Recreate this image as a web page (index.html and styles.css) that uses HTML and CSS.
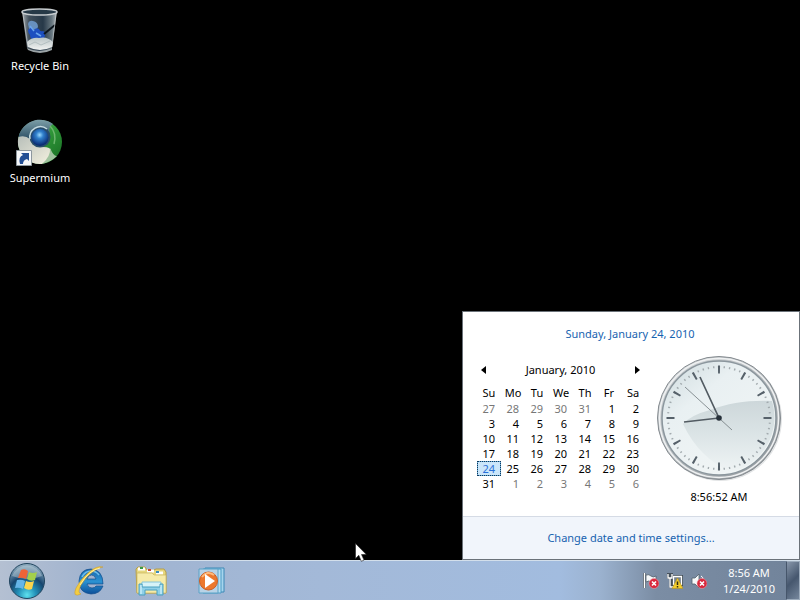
FILE: index.html
```html
<!DOCTYPE html>
<html lang="en">
<head>
<meta charset="utf-8">
<title>Desktop</title>
<link rel="stylesheet" href="styles.css">
</head>
<body>
<main class="desktop">
  <a class="shortcut" href="#recycle">
    <svg class="shortcut-icon" viewBox="0 0 48 48" aria-hidden="true">
      <defs>
        <linearGradient id="bin" x1="0" x2="1"><stop offset="0" stop-color="#a5acb0"/><stop offset=".2" stop-color="#414f5b"/><stop offset=".6" stop-color="#263848"/><stop offset=".85" stop-color="#687780"/><stop offset="1" stop-color="#b4babd"/></linearGradient>
        <linearGradient id="paper" x1="0" y1="0" x2="0" y2="1"><stop offset="0" stop-color="#b9c4c6"/><stop offset="1" stop-color="#f1f3f2"/></linearGradient>
      </defs>
      <path d="M6 5 L11 42 Q24 49 36 42 L41 5Z" fill="url(#bin)"/>
      <path d="M12 18q1-4 5-3 5 1 5 6l-2 3-7-1z" fill="#6790be"/>
      <path d="M12 24q3-4 6 0 2-3 5-1 1 3 4 2 3 1 2 4 0 4-5 5-3-1-5 0-5 0-5-5-2-2-2-5z" fill="#1d4fc0"/>
      <path d="M14 20l4 5M20 27l5 3" stroke="#6aa4ec" stroke-width="1.5"/>
      <path d="M39 19L28 28" stroke="#0c151d" stroke-width="2"/>
      <path d="M11 36q5-5 12-4 8-2 14 4l-1 5q-12 6-24 0z" fill="url(#paper)"/>
      <path d="M13 39l6-3 6 3 9-4" fill="none" stroke="#b3bfc1"/>
      <path d="M11 42q12 6 25 0v2q-12 6-24 0z" fill="#9ba3a6"/>
      <ellipse cx="23.5" cy="6" rx="17.5" ry="3" fill="#263947" stroke="#c7cccf" stroke-width="1.5"/>
      <path d="M7 8l5 33M40 8l-4 33" stroke="#d1d5d6" opacity=".6"/>
    </svg>
    <span>Recycle Bin</span>
  </a>
  <a class="shortcut" href="#supermium">
    <svg class="shortcut-icon" viewBox="0 0 48 48" aria-hidden="true">
      <defs>
        <radialGradient id="orb" cx=".48" cy=".35" r=".6"><stop offset="0" stop-color="#9bdaff"/><stop offset=".35" stop-color="#3181cd"/><stop offset="1" stop-color="#092b73"/></radialGradient>
        <linearGradient id="green" x1="0" y1="0" x2="1" y2="1"><stop offset="0" stop-color="#8ec48d"/><stop offset=".5" stop-color="#2f9738"/><stop offset="1" stop-color="#166a22"/></linearGradient>
        <linearGradient id="steel" x1="0" y1="0" x2="0" y2="1"><stop offset="0" stop-color="#7d9fa8"/><stop offset="1" stop-color="#284b61"/></linearGradient>
        <linearGradient id="cream" x1="0" y1="0" x2="1" y2="1"><stop offset="0" stop-color="#b8bfba"/><stop offset="1" stop-color="#f4f1df"/></linearGradient>
      </defs>
      <circle cx="24" cy="24" r="22" fill="url(#green)"/>
      <path d="M2.500 19A22 22 0 0 1 37 6Q32 9 34 15L14 17 13 22Q7 20 2.500 19Z" fill="url(#steel)"/>
      <path d="M2.500 19Q9 17 14 21 17 30 27 29 35 29 35 33 34 42 26 46A22 22 0 0 1 2.500 19Z" fill="url(#cream)"/>
      <path d="M34 30q1 8-8 16 9-2 15-8-3 1-7-8z" fill="#9fc29d"/>
      <path d="M34 8q7 7 4 18" fill="none" stroke="#6cb56d" stroke-width="1.500"/>
      <circle cx="24" cy="19" r="10.500" fill="#274d6b"/>
      <path d="M14 21a10.500 10.500 0 0 1 17-10" fill="none" stroke="#c8dce1" stroke-width="1.500"/>
      <circle cx="24" cy="19.500" r="8.500" fill="url(#orb)"/>
      <path d="M.5 32.500h15v15H.5z" fill="#f5f7f9" stroke="#8d979e"/>
      <path d="M4 46q-2-7 3-9L5 35h8v8l-2-2q-4 1-4 5z" fill="#214d94"/>
    </svg>
    <span>Supermium</span>
  </a>

  <section class="flyout" aria-label="Date and time">
    <div class="flyout-body">
      <a class="today" href="#today">Sunday, January 24, 2010</a>
      <div class="panels">
        <div class="calendar">
          <div class="month">
            <button type="button" aria-label="Previous month"><svg viewBox="0 0 5 8"><path d="M5 0v8L0 4z"/></svg></button>
            <span>January, 2010</span>
            <button type="button" aria-label="Next month"><svg viewBox="0 0 5 8"><path d="M0 0v8l5-4z"/></svg></button>
          </div>
          <table>
            <thead><tr><th>Su</th><th>Mo</th><th>Tu</th><th>We</th><th>Th</th><th>Fr</th><th>Sa</th></tr></thead>
            <tbody>
              <tr><td class="dim">27</td><td class="dim">28</td><td class="dim">29</td><td class="dim">30</td><td class="dim">31</td><td>1</td><td>2</td></tr>
              <tr><td>3</td><td>4</td><td>5</td><td>6</td><td>7</td><td>8</td><td>9</td></tr>
              <tr><td>10</td><td>11</td><td>12</td><td>13</td><td>14</td><td>15</td><td>16</td></tr>
              <tr><td>17</td><td>18</td><td>19</td><td>20</td><td>21</td><td>22</td><td>23</td></tr>
              <tr><td class="selected">24</td><td>25</td><td>26</td><td>27</td><td>28</td><td>29</td><td>30</td></tr>
              <tr><td>31</td><td class="dim">1</td><td class="dim">2</td><td class="dim">3</td><td class="dim">4</td><td class="dim">5</td><td class="dim">6</td></tr>
            </tbody>
          </table>
        </div>
        <div class="clock">
          <svg viewBox="-64 -64 128 128" aria-hidden="true">
            <defs>
              <linearGradient id="rim" x1="0" y1="0" x2="1" y2="1"><stop offset="0" stop-color="#d9dddf"/><stop offset=".5" stop-color="#b5babd"/><stop offset="1" stop-color="#8f9599"/></linearGradient>
              <linearGradient id="face" x1="0" y1="0" x2=".8" y2="1"><stop offset="0" stop-color="#cddadd"/><stop offset=".35" stop-color="#e9f0f2"/><stop offset="1" stop-color="#f2f6f6"/></linearGradient>
              <linearGradient id="sheen" x1="0" y1="0" x2="0" y2="1"><stop offset="0" stop-color="#cdd7da"/><stop offset=".4" stop-color="#d9e2e4"/><stop offset="1" stop-color="#eff4f5"/></linearGradient>
            </defs>
            <circle cx="1" cy="1" r="62" fill="#e2e4e5"/>
            <circle r="61.5" fill="url(#rim)" stroke="#858b90"/>
            <circle r="59.5" fill="none" stroke="#eff1f2" stroke-width="1.5"/>
            <circle r="57" fill="url(#face)" stroke="#8b969d" stroke-width="1.5"/>
            <path d="M-36 6Q-28-3-9-8C10-15 30-18 53-17A56 56 0 0 1 12 54Q-20 40-36 6Z" fill="url(#sheen)"/>
            <circle r="51" fill="none" stroke="#a3abaf" stroke-width="2" pathLength="360" stroke-dasharray="1.6 4.4" stroke-dashoffset=".8"/>
            <circle r="48.500" fill="none" stroke="#56616a" stroke-width="8" pathLength="360" stroke-dasharray="2.4 27.6" stroke-dashoffset="1.2"/>
            <path d="M-34 -31L13 12" stroke="#70787c" stroke-width=".8"/>
            <path d="M0 0L-35 4M0 0L-19-41" stroke="#525b62" stroke-width="1.700"/>
            <circle r="2.8" fill="#263039"/>
          </svg>
          <time>8:56:52 AM</time>
        </div>
      </div>
    </div>
    <footer class="flyout-footer"><a href="#settings">Change date and time settings...</a></footer>
  </section>

  <svg class="cursor" viewBox="0 0 12 19" aria-hidden="true"><path d="M.5.5v15l3.3-3.2 2.5 6 2.7-1.2-2.5-5.6h4.8z" fill="#fff" stroke="#222" stroke-width=".6"/></svg>
</main>

<nav class="taskbar" aria-label="Taskbar">
  <button class="start" type="button" aria-label="Start">
    <svg viewBox="0 0 38 38">
      <defs>
        <radialGradient id="start" cx=".5" cy=".9" r=".85"><stop offset="0" stop-color="#5ee1ee"/><stop offset=".3" stop-color="#2391b9"/><stop offset=".62" stop-color="#17466f"/><stop offset="1" stop-color="#8ba9bd"/></radialGradient>
      </defs>
      <circle cx="19" cy="19" r="17.5" fill="url(#start)" stroke="#21455f"/>
      <path d="M4 14A16 16 0 0 1 34 14Q19 20 4 14Z" fill="#d3e1e7" opacity=".4"/>
      <path d="M13 8q4-2 7 1l-2 8q-4-2-8-1z" fill="#ed6337"/>
      <path d="M21 10q4 2 8 0l-2 8q-4 2-8-1z" fill="#a3cf4c"/>
      <path d="M9 18q5-1 8 1l-2 8q-4-2-8-1z" fill="#65b5e8"/>
      <path d="M18 19q4 2 8 0l-2 8q-4 2-8-1z" fill="#fbd44c"/>
    </svg>
  </button>
  <div class="apps">
    <button type="button" aria-label="Internet Explorer">
      <svg viewBox="0 0 32 32">
        <defs><linearGradient id="ie" x1="0" y1="0" x2="0" y2="1"><stop offset="0" stop-color="#1767ad"/><stop offset=".5" stop-color="#2b91d1"/><stop offset="1" stop-color="#0b4f99"/></linearGradient></defs>
        <path d="M29 19H13q1 4 5 4 3 0 4-2h7q-3 8-12 8Q5 28 5 16 6 4 17 4q12 1 12 15zM13 14h9q-1-4-4.500-4T13 14z" fill="url(#ie)" stroke="#124d8c" stroke-width=".7"/>
        <path d="M8 12q3-6 9-6 5 0 8 4" fill="none" stroke="#6dbbe8" stroke-width="1.500"/>
        <path d="M29 2q-6-2-15 6Q6 15 2 23q-4 10 5 6-4-1 0-9Q13 10 20 6q6-4 9-4z" fill="#f3cd43" stroke="#c6962a" stroke-width=".5"/>
        <path d="M26 3q-11 2-20 17" fill="none" stroke="#fff0a1"/>
      </svg>
    </button>
    <button type="button" aria-label="Windows Explorer">
      <svg viewBox="0 0 32 32">
        <path d="M1 4l2-2h7l2 3h7l2-1h8l2 3v21H2z" fill="#e6d77d" stroke="#b69e48"/>
        <path d="M3 4h7M12 6h7M21 8h7" stroke="#fff" stroke-width="3"/>
        <path d="M5 3h3" stroke="#399a45" stroke-width="2"/><path d="M13 5h3" stroke="#c74a32" stroke-width="2"/><path d="M21 7h3" stroke="#398bbd" stroke-width="2"/>
        <path d="M2 8h15l2 2h12v18H2z" fill="#f6eba9" stroke="#c9b460" stroke-width=".7"/>
        <path d="M7 17h19v6H7z" fill="#d7f3f8" stroke="#88c5da"/>
        <path d="M4 19h3v3h18v-3h3v11h-6v-5H10v5H4z" fill="#8fd0e8" stroke="#4ba0c0"/>
        <path d="M6 20v9M26 20v9" stroke="#e1f9ff"/>
      </svg>
    </button>
    <button type="button" aria-label="Windows Media Player">
      <svg viewBox="0 0 32 32">
        <path d="M9 3h19v24H9z" fill="#a6d4ed" stroke="#3d88b5"/>
        <path d="M7 4h18v24H7z" fill="#b9e0f3" stroke="#4a9ac4"/>
        <path d="M3 4h19v24H3z" fill="#b8d3e7" stroke="#5aa2c6"/>
        <circle cx="12.500" cy="16" r="9" fill="#ec782d" stroke="#c95d25"/>
        <path d="M6 12q5-7 12-2" fill="none" stroke="#ffba7b" stroke-width="2"/>
        <path d="M9 9v14l10-7z" fill="#fff"/>
      </svg>
    </button>
  </div>
  <div class="tray">
    <button type="button" aria-label="Action Center">
      <svg viewBox="0 0 16 16"><path d="M1.500 0v15" stroke="#48535e" stroke-width="3"/><path d="M1.500 0v15" stroke="#fff" stroke-width="1.500"/><path d="M3 2q3-1 5 1t5 0v6q-3 2-5 0t-5 0z" fill="#f6f8f9" stroke="#52606c" stroke-width=".8"/><circle cx="11" cy="10.500" r="5" fill="#d8283d" stroke="#f3a5ad" stroke-width=".5"/><path d="M9 8.500l4 4m0-4l-4 4" stroke="#fff" stroke-width="1.600"/></svg>
    </button>
    <button type="button" aria-label="Network">
      <svg viewBox="0 0 16 16"><path d="M5 2h11v11H5z" fill="#3e4a53"/><path d="M6.500 3.500h8v8h-8z" fill="#76828b" stroke="#fff" stroke-width="1.300"/><path d="M0 0h6v6H5v9H2V6H0z" fill="#46515b"/><path d="M1 1v4h4V1M3 5v9h3" fill="none" stroke="#fff" stroke-width="1.300"/><path d="M10.500 5l5.500 10.500H5z" fill="#f3cd2d" stroke="#ad861b" stroke-width=".5"/><path d="M10.500 8.500v3.500m0 1v1.500" stroke="#332d13" stroke-width="1.500"/></svg>
    </button>
    <button type="button" aria-label="Volume muted">
      <svg viewBox="0 0 16 16"><path d="M1 5h3l4-4v14l-4-4H1z" fill="#f6f8f9" stroke="#51606c" stroke-width=".8"/><path d="M10 3q2 1 2 3" fill="none" stroke="#fff"/><circle cx="11" cy="10.500" r="5" fill="#d8283d" stroke="#f3a5ad" stroke-width=".5"/><path d="M9 8.500l4 4m0-4l-4 4" stroke="#fff" stroke-width="1.600"/></svg>
    </button>
  </div>
  <button class="tray-clock" type="button"><span>8:56 AM</span><span>1/24/2010</span></button>
  <button class="show-desktop" type="button" aria-label="Show desktop"></button>
</nav>
</body>
</html>
```
FILE: styles.css
```css
* { box-sizing: border-box; }

body {
  margin: 0;
  min-height: 100vh;
  display: flex;
  flex-direction: column;
  background: #000;
  font: 11px/16px "Noto Sans", "Open Sans", sans-serif;
}

a { color: #1763b0; text-decoration: none; }

button {
  margin: 0;
  padding: 0;
  border: 0;
  background: none;
  font: inherit;
  color: inherit;
}

svg { display: block; }

.desktop {
  position: relative;
  flex: 1;
  display: flex;
  flex-direction: column;
  align-items: flex-start;
  gap: 38px;
  padding: 6px 2px;
}

.shortcut {
  width: 76px;
  height: 74px;
  display: flex;
  flex-direction: column;
  align-items: center;
  gap: 4px;
  color: #fff;
}

.shortcut-icon { width: 48px; height: 48px; }

.flyout {
  position: absolute;
  right: 0;
  bottom: 0;
  width: 338px;
  border: 1px solid #6b7279;
  background: #fff;
}

.flyout-body {
  min-height: 204px;
  padding: 14px 16px 0 14px;
}

.today { display: block; text-align: center; }

.panels {
  display: flex;
  justify-content: space-between;
  margin-top: 12px;
}

.calendar { width: 168px; padding-top: 8px; }

.month {
  display: flex;
  justify-content: space-between;
  align-items: center;
  padding: 0 5px 0 4px;
  margin-bottom: 6px;
}

.month button { padding: 4px 0; }
.month svg { width: 5px; height: 8px; }

table {
  width: 100%;
  table-layout: fixed;
  border-collapse: collapse;
  text-align: right;
}

th, td { height: 15px; padding: 0 6px 0 0; line-height: 15px; }
th { height: 17px; padding: 0; font-weight: 400; text-align: center; }

.dim { color: #777; }

.selected {
  color: #2a70d8;
  background: #cbe6fa;
  outline: 1px dotted #123a5c;
  outline-offset: -1px;
  box-shadow: inset 0 0 0 1px #67aad7;
}

.clock {
  display: flex;
  flex-direction: column;
  align-items: center;
  gap: 7px;
}

.clock svg { width: 128px; height: 128px; }

.flyout-footer {
  height: 43px;
  display: flex;
  align-items: center;
  justify-content: center;
  border-top: 1px solid #d5dbe5;
  background: #f1f5fb;
}

.cursor {
  position: absolute;
  left: 355px;
  top: 543px;
  width: 12px;
  height: 19px;
}

.taskbar {
  display: flex;
  align-items: center;
  height: 40px;
  border-top: 1px solid #d3dfeb;
  background: linear-gradient(90deg, #b4c0d2 0%, #a0b3cf 12%, #a3b9d8 40%, #a2bcdf 70%, #9bb2cf 75%, #7b8da4 82%, #71839a 100%);
}

.start { margin-left: 8px; }
.start svg { width: 38px; height: 38px; }

.apps { display: flex; gap: 29px; margin-left: 28px; }
.apps svg { width: 32px; height: 32px; }

.tray { display: flex; gap: 8px; margin-left: auto; }
.tray svg { width: 16px; height: 16px; }

.tray-clock {
  display: flex;
  flex-direction: column;
  width: 74px;
  margin-left: 5px;
  color: #fff;
}

.show-desktop {
  width: 14px;
  height: 39px;
  border: 1px solid #9cabbc;
  border-left-color: #46566b;
  background: linear-gradient(135deg, #8796aa, #46576e 50%, #75869c);
}
```
